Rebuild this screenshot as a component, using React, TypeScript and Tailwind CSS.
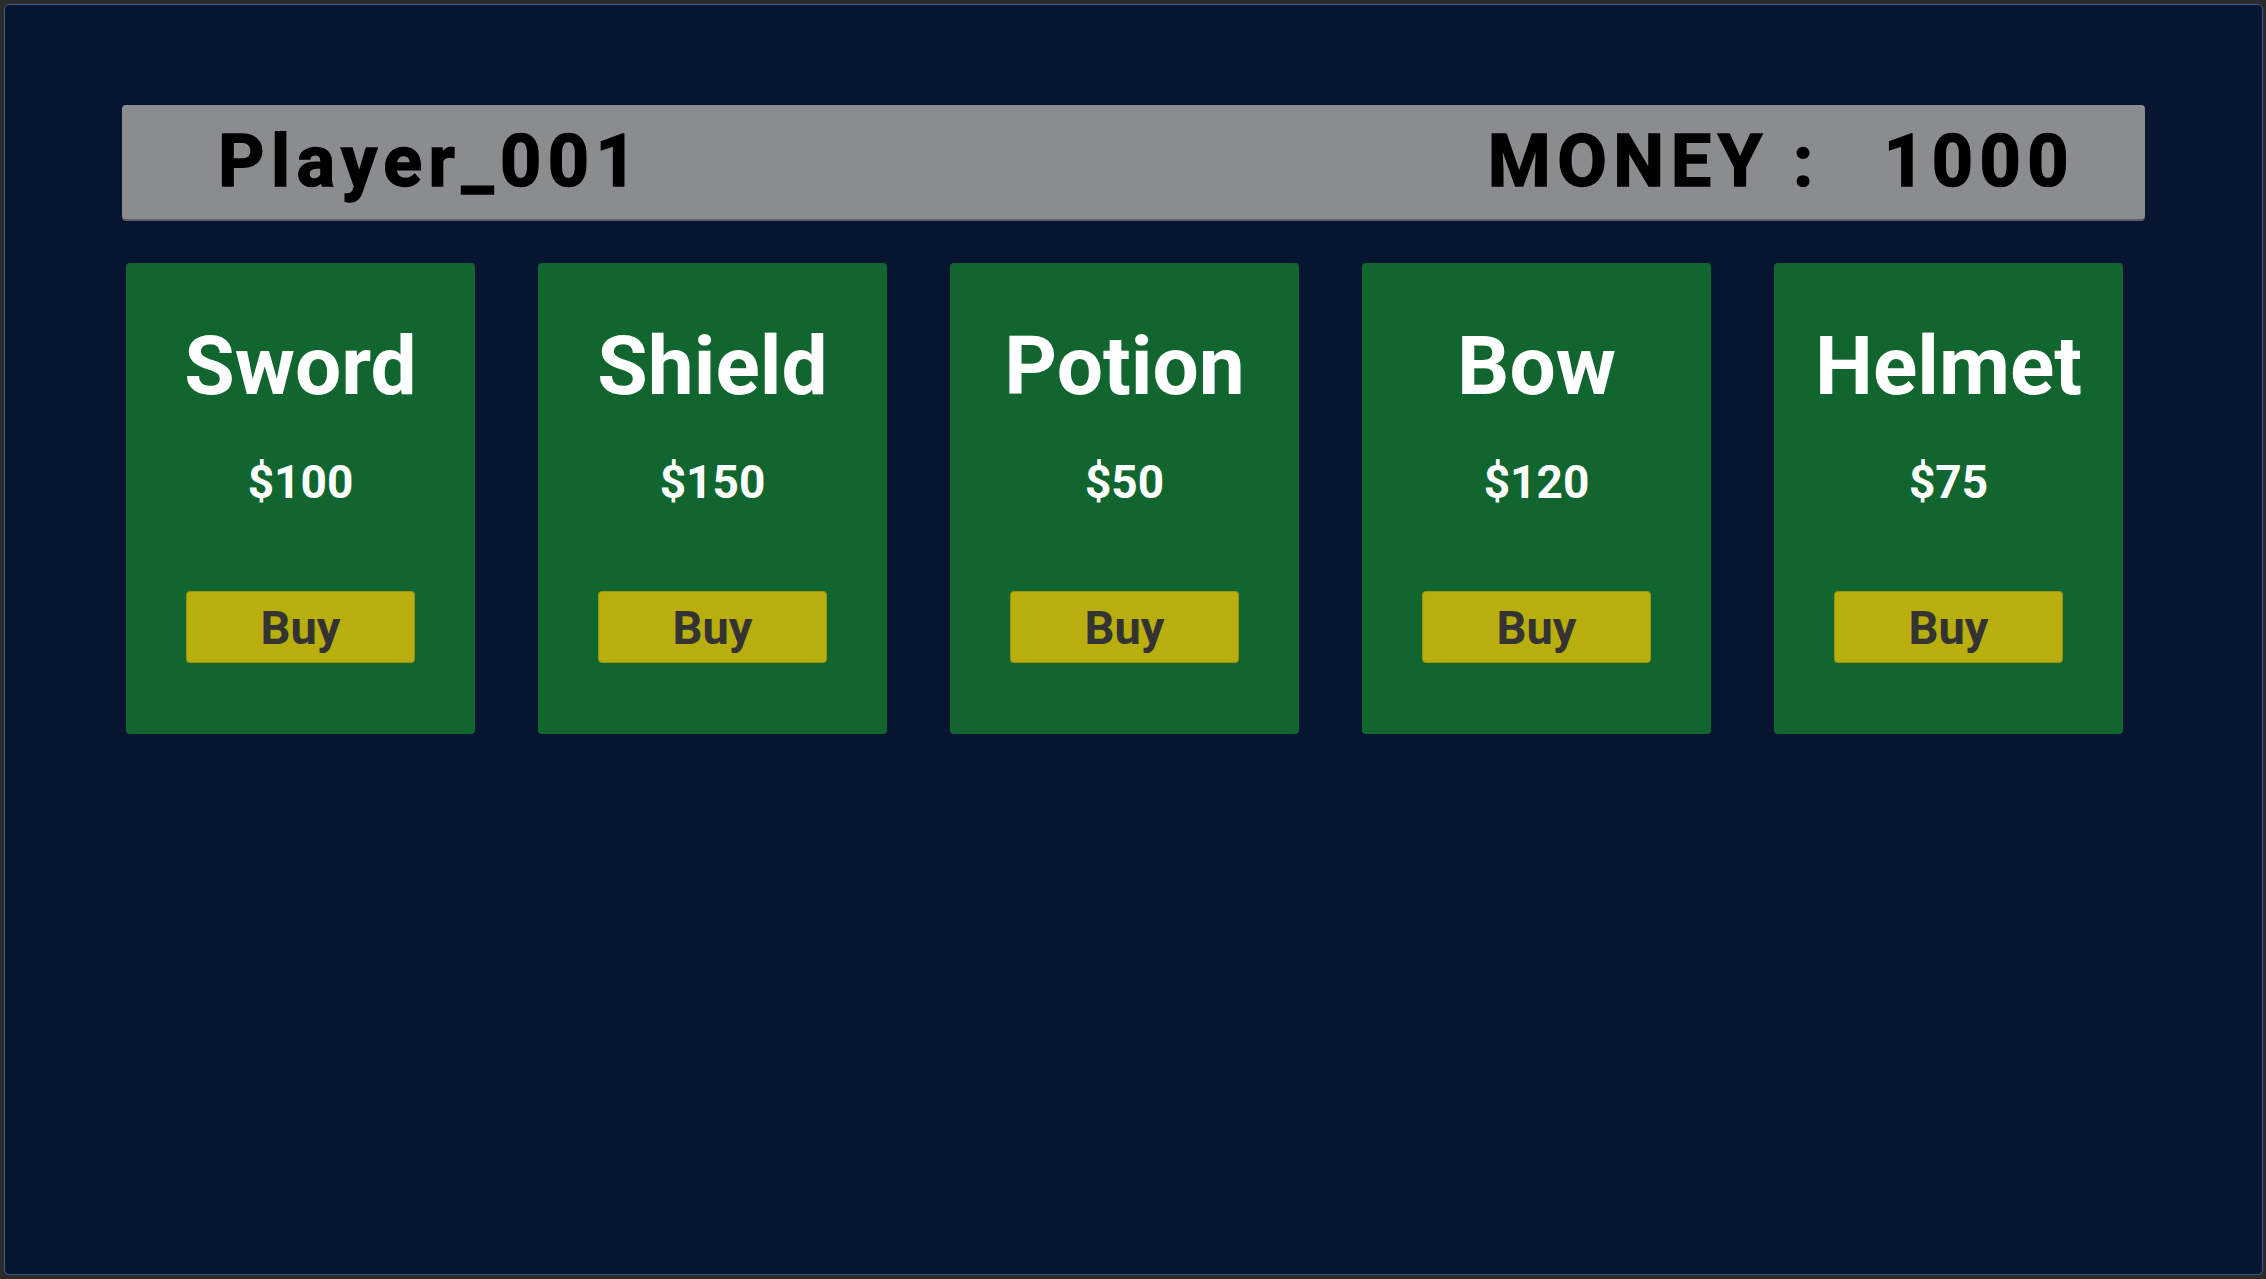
import React from 'react';

interface Item {
  name: string;
  price: number;
}

const items: Item[] = [
  { name: 'Sword', price: 100 },
  { name: 'Shield', price: 150 },
  { name: 'Potion', price: 50 },
  { name: 'Bow', price: 120 },
  { name: 'Helmet', price: 75 },
];

const ShopCard: React.FC<{ item: Item }> = ({ item }) => {
  return (
    <div className="flex h-[471px] w-[349px] flex-col items-center rounded-[4px] bg-[#116630] pt-[62px]">
      {/* Item name */}
      <h2 className="text-[82px] font-bold leading-none text-white">{item.name}</h2>

      {/* Price */}
      <p className="mt-[52px] text-[46px] font-bold leading-none text-white">${item.price}</p>

      <button className="mt-[86px] flex h-[72px] w-[229px] items-center justify-center rounded-[4px] border border-[#9c9410] bg-[#b8ae0d] text-[47px] font-bold leading-none text-[#333333]">
        Buy
      </button>
    </div>
  );
};

const App: React.FC = () => {
  return (
    <div className="flex h-screen w-full bg-[#2b2b2b] pb-[4px] pl-[4px] pr-[3px] pt-[4px] font-['Roboto',sans-serif]">
      <div className="flex flex-1 flex-col rounded-[5px] border border-[#3b5b8f] bg-[#081530] px-[117px] pt-[100px]">
        {/* Player bar */}
        <div className="flex h-[114px] items-center justify-between rounded-[4px] bg-[#8b8c90] pl-[96px] pr-[70px] shadow-[0_2px_0_#5f6066]">
          <span className="text-[72px] font-bold leading-none tracking-[0.09em] text-black [-webkit-text-stroke:1.5px_black]">
            Player_001
          </span>
          <span className="text-[72px] font-bold leading-none tracking-[0.09em] text-black [-webkit-text-stroke:1.5px_black]">
            MONEY :<span className="ml-[64px]">1000</span>
          </span>
        </div>

        {/* Shop items */}
        <div className="mt-[44px] flex gap-[63px] pl-[4px]">
          {items.map((item) => (
            <ShopCard key={item.name} item={item} />
          ))}
        </div>
      </div>
    </div>
  );
};

export default App;
